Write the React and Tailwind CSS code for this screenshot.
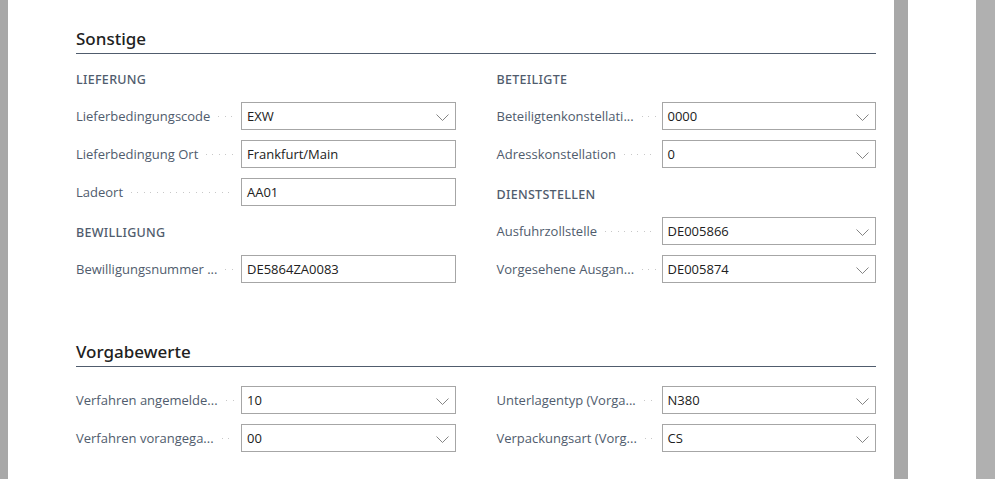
import React from 'react';

function Chevron() {
  return (
    <svg width="13" height="12" viewBox="0 0 13 12" className="shrink-0 text-[#777]">
      <path d="M0.5 3.5 L6.5 9.5 L12.5 3.5" fill="none" stroke="currentColor" strokeWidth="0.9" />
    </svg>
  );
}

function Field({ label, value, select }) {
  return (
    <div className="flex items-center h-[28px]">
      <div className="flex items-center w-[165px] shrink-0 pr-[6px] pt-[1px]">
        <span className="whitespace-nowrap text-[13px] text-[#505c6d]">{label}</span>
        <span className="flex-1 ml-[8px] h-px bg-[repeating-linear-gradient(90deg,#c8c8c8_0px,#c8c8c8_1px,transparent_1px,transparent_6.5px)]" />
      </div>
      <div className="flex-1 h-[28px] border border-[#a6a6a6] flex items-center pl-[5px] pr-[6px] pt-[1px]">
        <span className="flex-1 text-[13px] text-[#212121]">{value}</span>
        {select && <Chevron />}
      </div>
    </div>
  );
}

function Group({ title, children, first }) {
  return (
    <div className={first ? 'mt-[16px]' : 'mt-[17px]'}>
      <div className="h-[20px] leading-[20px] font-['Noto_Sans',sans-serif] text-[12.5px] font-medium tracking-[0.3px] text-[#505c6d]">{title}</div>
      <div className="mt-[12px] flex flex-col gap-[10px]">{children}</div>
    </div>
  );
}

function SectionTitle({ children }) {
  return (
    <div className="border-b border-[#505c6d] pb-[2px]">
      <div className="h-[24px] leading-[24px] font-['Noto_Sans',sans-serif] text-[17px] font-medium text-[#212121]">{children}</div>
    </div>
  );
}

export default function App() {
  return (
    <div className="flex h-[479px] w-[995px] overflow-hidden bg-white font-['Segoe_UI','Open_Sans',sans-serif]">
      <div className="w-[8px] shrink-0 bg-[#a8a8a8]" />
      <div className="w-[886px] shrink-0 bg-white pl-[68px] pr-[18px] pt-[27px]">
        <SectionTitle>Sonstige</SectionTitle>
        <div className="grid grid-cols-2 gap-x-[41px]">
          <div>
            <Group title="LIEFERUNG" first>
              <Field label="Lieferbedingungscode" value="EXW" select />
              <Field label="Lieferbedingung Ort" value="Frankfurt/Main" />
              <Field label="Ladeort" value="AA01" />
            </Group>
            <Group title="BEWILLIGUNG">
              <Field label="Bewilligungsnummer ..." value="DE5864ZA0083" />
            </Group>
          </div>
          <div>
            <Group title="BETEILIGTE" first>
              <Field label="Beteiligtenkonstellati..." value="0000" select />
              <Field label="Adresskonstellation" value="0" select />
            </Group>
            <Group title="DIENSTSTELLEN">
              <Field label="Ausfuhrzollstelle" value="DE005866" select />
              <Field label="Vorgesehene Ausgan..." value="DE005874" select />
            </Group>
          </div>
        </div>

        <div className="mt-[57px]">
          <SectionTitle>Vorgabewerte</SectionTitle>
        </div>
        <div className="mt-[19px] grid grid-cols-2 gap-x-[41px]">
          <div className="flex flex-col gap-[10px]">
            <Field label="Verfahren angemelde..." value="10" select />
            <Field label="Verfahren vorangega..." value="00" select />
          </div>
          <div className="flex flex-col gap-[10px]">
            <Field label="Unterlagentyp (Vorga..." value="N380" select />
            <Field label="Verpackungsart (Vorg..." value="CS" select />
          </div>
        </div>
      </div>
      <div className="w-[14px] shrink-0 bg-[#a8a8a8]" />
      <div className="w-[68px] shrink-0 bg-white" />
      <div className="flex-1 bg-[#b0b0b0]" />
    </div>
  );
}
